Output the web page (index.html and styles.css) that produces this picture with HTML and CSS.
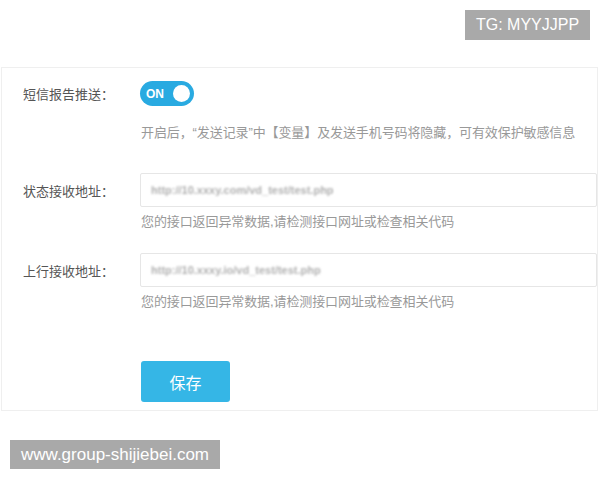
FILE: index.html
```html
<!DOCTYPE html>
<html lang="zh-CN">
<head>
  <meta charset="UTF-8" />
  <meta name="viewport" content="width=device-width, initial-scale=1.0" />
  <title>短信报告推送</title>
  <link rel="stylesheet" href="styles.css">
</head>
<body>
  <div class="tag">TG: MYYJJPP</div>

  <div class="panel">
    <div class="row">
      <label class="label">短信报告推送：</label>
      <div class="toggle"><span>ON</span><i class="knob"></i></div>
    </div>
    <p class="hint first">开启后，“发送记录”中【变量】及发送手机号码将隐藏，可有效保护敏感信息</p>

    <div class="row field-row">
      <label class="label">状态接收地址：</label>
      <div class="input"><span class="blur">http://10.xxxy.com/vd_test/test.php</span></div>
    </div>
    <p class="hint">您的接口返回异常数据,请检测接口网址或检查相关代码</p>

    <div class="row field-row second">
      <label class="label">上行接收地址：</label>
      <div class="input"><span class="blur">http://10.xxxy.io/vd_test/test.php</span></div>
    </div>
    <p class="hint">您的接口返回异常数据,请检测接口网址或检查相关代码</p>

    <button class="save">保存</button>
  </div>

  <div class="site">www.group-shijiebei.com</div>
</body>
</html>
```

FILE: styles.css
```css
body {
  margin: 0;
  background: #fff;
  font-family: "Liberation Sans", "Noto Sans CJK SC", sans-serif;
  color: #555;
}

.panel {
  margin: 67px 2px 0 1px;
  border: 1px solid #efefef;
  padding: 13px 0 8px 0;
}

.row {
  display: flex;
  align-items: center;
}

.label {
  width: 117px;
  padding-left: 21px;
  font-size: 13px;
  color: #555;
}

.toggle {
  width: 54px;
  height: 25px;
  border-radius: 13px;
  background: #29aae1;
  display: flex;
  align-items: center;
  justify-content: space-between;
  padding: 0 4px 0 6px;
  box-sizing: border-box;
}

.toggle span {
  color: #fff;
  font-weight: bold;
  font-size: 12px;
  font-family: "Liberation Sans", sans-serif;
}

.knob {
  width: 17px;
  height: 17px;
  border-radius: 50%;
  background: #fff;
}

.hint {
  margin: 6px 0 0 139px;
  font-size: 13px;
  line-height: 18px;
  color: #999;
  letter-spacing: -0.1px;
}

.hint.first {
  margin-top: 18px;
}

.field-row {
  margin-top: 31px;
}

.field-row.second {
  margin-top: 22px;
}

.input {
  flex: 1;
  height: 34px;
  border: 1px solid #e6e6e6;
  border-radius: 2px;
  box-sizing: border-box;
  display: flex;
  align-items: center;
  padding-left: 10px;
}

.blur {
  font-size: 11px;
  font-weight: bold;
  color: #b0b0b0;
  filter: blur(1.3px);
}

.save {
  display: block;
  margin: 50px 0 0 139px;
  width: 89px;
  height: 41px;
  border: none;
  border-radius: 3px;
  background: #35b6e6;
  color: #fff;
  font-size: 16px;
  font-family: "Noto Sans CJK SC", sans-serif;
}

.tag {
  position: absolute;
  top: 10px;
  left: 465px;
  width: 125px;
  height: 30px;
  line-height: 30px;
  text-align: center;
  background: #a9a9a9;
  color: #fff;
  font-size: 16px;
}

.site {
  position: absolute;
  top: 440px;
  left: 10px;
  width: 210px;
  height: 29px;
  line-height: 29px;
  text-align: center;
  background: #a9a9a9;
  color: #fff;
  font-size: 17px;
}
```
